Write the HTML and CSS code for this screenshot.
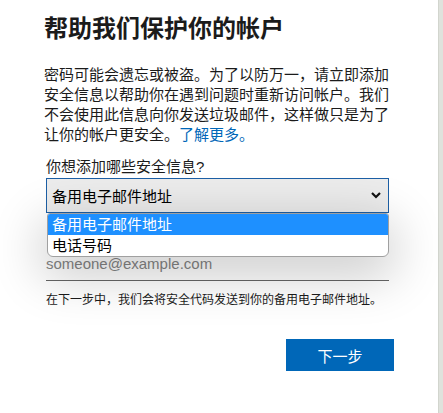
FILE: index.html
```html
<!DOCTYPE html>
<html lang="zh-CN">
<head>
<meta charset="utf-8">
<title>帮助我们保护你的帐户</title>
<link rel="stylesheet" href="styles.css">
</head>
<body>
<div class="page">
  <main class="content">
    <h1 class="title">帮助我们保护你的帐户</h1>
    <p class="intro">密码可能会遗忘或被盗。为了以防万一，请立即添加安全信息以帮助你在遇到问题时重新访问帐户。我们不会使用此信息向你发送垃圾邮件，这样做只是为了让你的帐户更安全。<a class="link" href="#">了解更多。</a></p>
    <div class="label">你想添加哪些安全信息?</div>
    <div class="select-wrap">
      <div class="select">
        <span class="select-value">备用电子邮件地址</span>
        <svg class="chevron" width="10" height="7" viewBox="0 0 10 7"><polyline points="1,1 5,5 9,1" fill="none" stroke="#111" stroke-width="2.2"/></svg>
      </div>
      <ul class="dropdown">
        <li class="option option-active">备用电子邮件地址</li>
        <li class="option">电话号码</li>
      </ul>
    </div>
    <div class="email">someone@example.com</div>
    <p class="hint">在下一步中，我们会将安全代码发送到你的备用电子邮件地址。</p>
    <div class="actions">
      <button class="next">下一步</button>
    </div>
  </main>
  <div class="edge"></div>
</div>
</body>
</html>
```
FILE: styles.css
```css
html, body {
  margin: 0;
  padding: 0;
  background: #fff;
}
body {
  font-family: "Liberation Sans", "Noto Sans CJK SC", sans-serif;
  color: #1b1b1b;
}
.page {
  display: flex;
  height: 100vh;
  overflow: hidden;
}
.content {
  flex: 1;
  padding: 13px 0 0 44px;
  width: 350px;
  max-width: 350px;
}
.title {
  margin: 0;
  font-size: 24px;
  line-height: 32px;
  font-weight: 700;
  color: #1b1b1b;
}
.intro {
  margin: 19.5px 0 0 0;
  width: 346px;
  font-size: 15px;
  line-height: 20px;
}
.link {
  display: inline-block;
  line-height: 20px;
  height: 20px;
  vertical-align: top;
  color: #0067b8;
  text-decoration: none;
}
.label {
  margin: 12px 0 0 2px;
  font-size: 15px;
  line-height: 20px;
  color: #1b1b1b;
}
.select-wrap {
  position: relative;
  margin: 1px 0 0 2px;
  width: 343px;
  z-index: 2;
}
.select {
  box-sizing: border-box;
  height: 35px;
  display: flex;
  align-items: center;
  justify-content: space-between;
  padding: 0 5px 0 5px;
  background: #ececec;
  border: 1px solid #1c5fa5;
  font-size: 15px;
  color: #000;
}
.chevron {
  margin-right: 2px;
}
.dropdown {
  position: absolute;
  top: 35.5px;
  left: 1px;
  right: 0;
  margin: 0;
  padding: 0;
  list-style: none;
  background: #fff;
  border: 1px solid #a0a0a0;
  border-radius: 3px 3px 6px 6px;
  overflow: hidden;
  box-shadow: 0 14px 50px 6px rgba(0, 0, 0, 0.2);
}
.option {
  height: 21px;
  line-height: 21px;
  padding-left: 4px;
  font-size: 15px;
  color: #000;
}
.option-active {
  background: #1e90ff;
  color: #fff;
}
.email {
  box-sizing: border-box;
  margin: 35.5px 0 0 2px;
  width: 343px;
  height: 33px;
  line-height: 32px;
  font-size: 15px;
  color: #858585;
  border-bottom: 1px solid #666;
}
.hint {
  margin: 11px 0 0 2px;
  font-size: 12px;
  line-height: 16px;
  color: #1b1b1b;
}
.actions {
  display: flex;
  justify-content: flex-end;
  margin-top: 31px;
}
.next {
  width: 108px;
  height: 32px;
  border: none;
  background: #0067b8;
  color: #fff;
  font-family: "Liberation Sans", "Noto Sans CJK SC", sans-serif;
  font-size: 15px;
  padding: 0;
}
.edge {
  margin-left: auto;
  width: 5px;
  flex: 0 0 5px;
  background: #dfe2dc;
  border-left: 1px solid #d2d5ce;
  box-sizing: border-box;
}
```
